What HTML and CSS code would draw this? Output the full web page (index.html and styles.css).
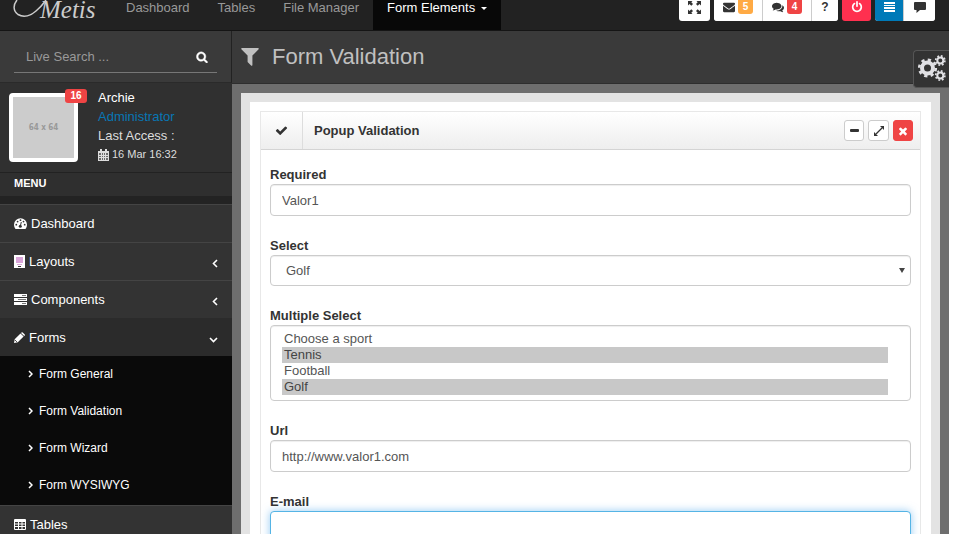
FILE: index.html
```html
<!DOCTYPE html>
<html lang="en">
<head>
<meta charset="utf-8">
<title>Metis - Form Validation</title>
<link rel="stylesheet" href="styles.css">
</head>
<body>
<header class="topbar">
  <a class="logo" href="#" aria-label="Metis">
    <svg class="swash" viewBox="0 0 38 19" aria-hidden="true"><path d="M4 0C0 5 0 11 5 14.500c6 3.500 13 1 18-3.500C28 7 30 4 33 0" fill="none" stroke="currentColor" stroke-width="1.500"/></svg>
    <span class="logo-text">Metis</span>
  </a>
  <nav class="topnav">
    <a href="#">Dashboard</a>
    <a href="#">Tables</a>
    <a href="#">File Manager</a>
    <a href="#" class="current">Form Elements <span class="caret"></span></a>
  </nav>
  <div class="tools">
    <div class="group">
      <button class="tool expand" type="button" aria-label="Fullscreen">
        <svg width="13" height="13" viewBox="0 0 13 13"><path fill="currentColor" d="M0 0h4.500L3.300 1.300 5 3 3.300 4.700 1.500 3 0 4.500zM13 0v4.500L11.500 3 9.700 4.700 8 3l1.700-1.700L8.500 0zM0 13V8.500L1.500 10l1.800-1.700L5 10l-1.700 1.700L4.500 13zM13 13H8.500l1.200-1.300L8 10l1.700-1.700L11.500 10 13 8.500z"/></svg>
      </button>
    </div>
    <div class="group">
      <button class="tool counted" type="button" aria-label="Messages">
        <svg width="12" height="12" viewBox="0 0 1792 1792"><path fill="currentColor" d="M1792 710v794q0 66-47 113t-113 47h-1472q-66 0-113-47t-47-113v-794q44 49 101 87 362 246 497 345 57 42 92.500 65.500t94.500 48 110 24.500h2q51 0 110-24.500t94.500-48 92.500-65.500q170-123 498-345 57-39 100-87zm0-294q0 79-49 151t-122 123q-376 261-468 325-10 7-42.500 31t-54 38.500-52 32.500-57.500 27-50 9h-2q-23 0-50-9t-57.500-27-52-32.500-54-38.500-42.500-31q-91-64-262-182.500t-205-142.500q-62-42-117-115.500t-55-136.500q0-78 41.500-130t118.500-52h1472q65 0 112.500 47t47.500 113z"/></svg>
        <span class="count orange">5</span>
      </button>
      <button class="tool counted" type="button" aria-label="Comments">
        <svg width="12" height="12" viewBox="0 0 1792 1792"><path fill="currentColor" d="M1408 768q0 139-94 257t-256.500 186.500-353.500 68.500q-86 0-176-16-124 88-278 128-36 9-86 16h-3q-11 0-20.500-8t-11.500-21q-1-3-1-6.500t.5-6.500 2-6l2.500-5 3.500-5.500 4-5 4.500-5 4-4.500q5-6 23-25t26-29.500 22.500-29 25-38.500 20.500-44q-124-72-195-177t-71-224q0-139 94-257t256.500-186.500 353.500-68.500 353.500 68.500 256.500 186.500 94 257zm384 256q0 120-71 224.500t-195 176.500q10 24 20.500 44t25 38.500 22.500 29 26 29.500 23 25q1 1 4 4.500t4.500 5 4 5 3.500 5.500l2.500 5 2 6 .5 6.500-1 6.500q-3 14-13 22t-22 7q-50-7-86-16-154-40-278-128-90 16-176 16-271 0-472-132 58 4 88 4 161 0 309-45t264-129q125-92 192-212t67-254q0-77-23-152 129 71 204 178t75 230z"/></svg>
        <span class="count red">4</span>
      </button>
      <button class="tool help" type="button">?</button>
    </div>
    <div class="group">
      <button class="tool power" type="button" aria-label="Log out">
        <svg width="12" height="12" viewBox="0 0 1792 1792"><path fill="currentColor" d="M1664 896q0 156-61 298t-164 245-245 164-298 61-298-61-245-164-164-245-61-298q0-182 80.500-343t226.500-270q43-32 95.500-25t83.500 50q32 42 24.500 94.500t-49.500 84.500q-98 74-151.500 181t-53.500 228q0 104 40.500 198.500t109.500 163.500 163.500 109.500 198.500 40.500 198.500-40.500 163.500-109.500 109.500-163.500 40.500-198.500q0-121-53.500-228t-151.500-181q-42-32-49.500-84.500t24.500-94.500q31-43 84-50t95 25q146 109 226.500 270t80.500 343zm-640-768v640q0 52-38 90t-90 38-90-38-38-90v-640q0-52 38-90t90-38 90 38 38 90z"/></svg>
      </button>
    </div>
    <div class="group">
      <button class="tool blue" type="button" aria-label="Toggle left menu">
        <svg width="11" height="10" viewBox="0 0 11 10"><path fill="currentColor" d="M0 0h11v2H0zM0 3h11v1H0zM0 5h11v2H0zM0 8h11v2H0z"/></svg>
      </button>
      <button class="tool" type="button" aria-label="Toggle chat">
        <svg width="12" height="11" viewBox="0 0 12 11"><path fill="currentColor" d="M1 0h10q1 0 1 1v6q0 1-1 1H6L2.500 11V8H1Q0 8 0 7V1Q0 0 1 0z"/></svg>
      </button>
    </div>
  </div>
</header>

<div class="columns">
  <aside class="sidebar">
    <form class="search">
      <div class="search-line">
        <input type="text" aria-label="Live search" placeholder="Live Search ...">
        <button type="button" aria-label="Search">
          <svg width="12" height="12" viewBox="0 0 1792 1792"><path fill="currentColor" stroke="currentColor" stroke-width="60" d="M1216 832q0-185-131.500-316.500t-316.500-131.500-316.500 131.500-131.500 316.500 131.500 316.500 316.500 131.500 316.500-131.500 131.500-316.500zm512 832q0 52-38 90t-90 38q-54 0-90-38l-343-342q-179 124-399 124-143 0-273.500-55.500t-225-150-150-225-55.500-273.500 55.500-273.500 150-225 225-150 273.500-55.500 273.500 55.500 225 150 150 225 55.500 273.500q0 220-124 399l343 343q37 37 37 90z"/></svg>
        </button>
      </div>
    </form>
    <div class="user">
      <div class="avatar">64 x 64<span class="badge">16</span></div>
      <div class="about">
        <div class="name">Archie</div>
        <a href="#">Administrator</a>
        <div>Last Access :</div>
        <div class="when">
          <svg width="11" height="12" viewBox="0 0 11 12"><path fill="currentColor" fill-rule="evenodd" d="M0 2h2V0h2v2h3V0h2v2h2v10H0zM1 4v2h2V4zM4 4v2h1V4zM6 4v2h1V4zM8 4v2h2V4zM1 7v1h2V7zM4 7v1h1V7zM6 7v1h1V7zM8 7v1h2V7zM1 9v2h2V9zM4 9v2h1V9zM6 9v2h1V9zM8 9v2h2V9z"/><path fill="currentColor" fill-opacity=".35" d="M1 4h9v7H1z"/></svg>
          16 Mar 16:32
        </div>
      </div>
    </div>
    <h2 class="menu-title">MENU</h2>
    <ul class="menu">
      <li><a href="#">
        <svg width="13" height="11" viewBox="0 0 13 11"><path fill="currentColor" d="M1.500 11A6.500 6.500 0 1 1 11.500 11z"/><g fill="#333"><circle cx="2.300" cy="6.700" r=".9"/><circle cx="3.600" cy="3.600" r=".9"/><circle cx="6.500" cy="2.200" r=".9"/><circle cx="9.500" cy="3.600" r=".9"/><circle cx="10.700" cy="6.700" r=".9"/><circle cx="6.300" cy="8.300" r="1.500"/></g><path d="M6.300 8.300l1-4.300" stroke="#333"/></svg>
        Dashboard</a></li>
      <li><a href="#">
        <svg width="11" height="13" viewBox="0 0 11 13"><path fill="currentColor" d="M0 0h11v13H0z"/><path d="M2 2h7v6H2zM3 9h5v1H3z" fill="#d9a5d9"/><path d="M4 11h3v1H4z" fill="#333"/></svg>
        Layouts
        <svg class="arrow" width="6" height="9" viewBox="0 0 6 9"><path d="M5 1L1.500 4.500 5 8" fill="none" stroke="currentColor" stroke-width="1.600"/></svg></a></li>
      <li><a href="#">
        <svg width="13" height="11" viewBox="0 0 13 11"><path fill="currentColor" d="M0 0h13v3H0zM0 4h13v3H0zM0 8h13v3H0z"/><path d="M8 1h4v1H8zM4 5h8v1H4zM8 9h4v1H8z" fill="#777"/></svg>
        Components
        <svg class="arrow" width="6" height="9" viewBox="0 0 6 9"><path d="M5 1L1.500 4.500 5 8" fill="none" stroke="currentColor" stroke-width="1.600"/></svg></a></li>
      <li class="open"><a href="#">
        <svg width="11" height="11" viewBox="0 0 11 11"><path fill="currentColor" d="M0 11l.7-3.800L6.500 1.400l3.100 3.100L3.800 10.300zM7.200.7Q8 0 8.700.5l1.800 1.800q.8.700 0 1.500L10.200 4 7 1z"/><path d="M1.200 8.200l1.600 1.600" stroke="#2b2b2b"/></svg>
        Forms
        <svg class="arrow" width="9" height="6" viewBox="0 0 9 6"><path d="M1 1l3.500 3.500L8 1" fill="none" stroke="currentColor" stroke-width="1.600"/></svg></a>
        <ul class="submenu">
          <li><a href="#"><svg width="5" height="8" viewBox="0 0 5 8"><path d="M1 1l3 3-3 3" fill="none" stroke="currentColor" stroke-width="1.500"/></svg>Form General</a></li>
          <li><a href="#"><svg width="5" height="8" viewBox="0 0 5 8"><path d="M1 1l3 3-3 3" fill="none" stroke="currentColor" stroke-width="1.500"/></svg>Form Validation</a></li>
          <li><a href="#"><svg width="5" height="8" viewBox="0 0 5 8"><path d="M1 1l3 3-3 3" fill="none" stroke="currentColor" stroke-width="1.500"/></svg>Form Wizard</a></li>
          <li><a href="#"><svg width="5" height="8" viewBox="0 0 5 8"><path d="M1 1l3 3-3 3" fill="none" stroke="currentColor" stroke-width="1.500"/></svg>Form WYSIWYG</a></li>
        </ul>
      </li>
      <li><a href="#">
        <svg width="12" height="11" viewBox="0 0 12 11"><path fill="currentColor" fill-rule="evenodd" d="M1 0h10q1 0 1 1v9q0 1-1 1H1q-1 0-1-1V1q0-1 1-1zM1 3v1.500h3V3zM5 3v1.500h2.500V3zM8.500 3v1.500H11V3zM1 5.500V7h3V5.500zM5 5.500V7h2.500V5.500zM8.500 5.500V7H11V5.500zM1 8v2h3V8zM5 8v2h2.500V8zM8.500 8v2H11V8z"/></svg>
        Tables</a></li>
    </ul>
  </aside>

  <main class="main">
    <div class="page-head">
      <svg width="18" height="18" viewBox="180 256 1432 1432"><path fill="currentColor" d="M1595 295q17 41-14 70l-493 493v742q0 42-39 59-13 5-25 5-27 0-45-19l-256-256q-19-19-19-45v-486l-493-493q-31-29-14-70 17-39 59-39h1280q42 0 59 39z"/></svg>
      <h1>Form Validation</h1>
    </div>
    <button class="settings" type="button" aria-label="Settings">
      <svg width="28" height="26" viewBox="0 0 28 26" fill="none" stroke="currentColor">
        <circle cx="9.500" cy="13" r="5.500" stroke-width="4"/><circle cx="9.500" cy="13" r="8.300" stroke-width="2.600" stroke-dasharray="3.260 3.260"/>
        <circle cx="22.300" cy="5.500" r="3" stroke-width="2"/><circle cx="22.300" cy="5.500" r="4.600" stroke-width="1.700" stroke-dasharray="1.810 1.800"/>
        <circle cx="22.300" cy="20.500" r="3" stroke-width="2"/><circle cx="22.300" cy="20.500" r="4.600" stroke-width="1.700" stroke-dasharray="1.810 1.800"/>
      </svg>
    </button>
    <div class="content">
      <div class="inner">
        <section class="box">
          <header class="box-head">
            <span class="box-icon"><svg width="13" height="13" viewBox="0 0 1792 1792"><path fill="currentColor" d="M1671 566q0 40-28 68l-724 724-136 136q-28 28-68 28t-68-28l-136-136-362-362q-28-28-28-68t28-68l136-136q28-28 68-28t68 28l294 295 656-657q28-28 68-28t68 28l136 136q28 28 28 68z"/></svg></span>
            <h3>Popup Validation</h3>
            <div class="box-tools">
              <button type="button" aria-label="Collapse"><svg width="9" height="3" viewBox="0 0 9 3"><rect width="9" height="3" rx="1" fill="currentColor"/></svg></button>
              <button type="button" class="wide" aria-label="Expand"><svg width="10" height="10" viewBox="0 0 10 10"><path d="M6 0H10v4zM0 6V10h4z" fill="currentColor"/><path d="M2 8l6-6" stroke="currentColor" stroke-width="1.300"/></svg></button>
              <button type="button" class="close" aria-label="Close"><svg width="12" height="12" viewBox="0 0 1792 1792"><path fill="currentColor" d="M1490 1322q0 40-28 68l-136 136q-28 28-68 28t-68-28l-294-294-294 294q-28 28-68 28t-68-28l-136-136q-28-28-28-68t28-68l294-294-294-294q-28-28-28-68t28-68l136-136q28-28 68-28t68 28l294 294 294-294q28-28 68-28t68 28l136 136q28 28 28 68t-28 68l-294 294 294 294q28 28 28 68z"/></svg></button>
            </div>
          </header>
          <form class="fields">
            <div class="field">
              <label for="req">Required</label>
              <input class="control" id="req" type="text" value="Valor1">
            </div>
            <div class="field">
              <label for="sport">Select</label>
              <div class="select-wrap">
                <select class="control" id="sport">
                  <option>Choose a sport</option><option>Tennis</option><option>Football</option><option selected>Golf</option>
                </select>
              </div>
            </div>
            <div class="field">
              <label for="sports">Multiple Select</label>
              <select class="control multi" id="sports" multiple size="4">
                <option>Choose a sport</option><option selected>Tennis</option><option>Football</option><option selected>Golf</option>
              </select>
            </div>
            <div class="field">
              <label for="url">Url</label>
              <input class="control" id="url" type="url" value="http://www.valor1.com">
            </div>
            <div class="field">
              <label for="email">E-mail</label>
              <input class="control active" id="email" type="email">
            </div>
          </form>
        </section>
      </div>
    </div>
  </main>
</div>
</body>
</html>
```
FILE: styles.css
```css
* { box-sizing: border-box; }

html, body { height: 100%; }

body {
  margin: 0;
  padding-right: 11px;
  overflow: hidden;
  background: #fff;
  font: 13px/16px "Liberation Sans", Arial, sans-serif;
  color: #333;
}

a { color: inherit; text-decoration: none; }
ul { margin: 0; padding: 0; list-style: none; }
button, input, select { font: inherit; margin: 0; }
button { display: inline-flex; align-items: center; justify-content: center; padding: 0; border: 0; color: #333; }
svg { display: block; flex: none; }
h1, h2, h3 { margin: 0; }

/* Top bar */
.topbar {
  display: flex;
  align-items: flex-start;
  height: 31px;
  background: #222;
  border-bottom: 1px solid #151515;
}
.logo {
  position: relative;
  width: 112px;
  padding-left: 40px;
  color: #ccc;
}
.logo-text { display: block; font: italic 25px/20px "Liberation Serif", serif; }
.swash { position: absolute; left: 13px; top: 0; width: 38px; height: 19px; }
.topnav { display: flex; align-self: stretch; color: #999; }
.topnav a { padding: 0 14px 14px; }
.topnav .current { background: #080808; color: #fff; }
.caret {
  display: inline-block;
  margin-left: 2px;
  vertical-align: middle;
  border: 3px solid transparent;
  border-top-color: currentColor;
  border-bottom: 0;
}
.tools { display: flex; gap: 4px; margin-left: auto; padding-right: 14px; }
.group { display: flex; gap: 1px; background: #ccc; border-radius: 0 0 3px 3px; overflow: hidden; }
.tool { width: 31px; height: 21px; padding-bottom: 7px; background: #fff; }
.tool.counted { width: 48px; gap: 3px; }
.tool.help { width: 26px; font-size: 12px; font-weight: bold; }
.tool.power { width: 29px; background: #ff304f; color: #fff; }
.tool.blue { width: 28px; background: #007ab8; color: #fff; }
.count {
  width: 15px;
  border-radius: 0 0 3px 3px;
  color: #fff;
  font: bold 10px/14px "Liberation Sans", sans-serif;
}
.orange { background: #fa4; }
.red { background: #ef4444; }

/* Page columns */
.columns { display: flex; min-height: calc(100% - 31px); }

/* Sidebar */
.sidebar { width: 232px; flex: none; background: #232323; color: #eee; }
.search { height: 52px; padding: 10px 14px; background: #3a3a3a; border-right: 1px solid #222; border-bottom: 1px solid #2a2a2a; }
.search-line { display: flex; align-items: center; height: 32px; border-bottom: 1px solid #777; }
.search input { flex: 1; min-width: 0; padding: 0 12px; border: 0; background: none; color: #ccc; outline: 0; }
.search input::placeholder { color: #999; opacity: 1; }
.search button { width: 31px; background: none; color: #fff; }

.user { display: flex; gap: 21px; height: 90px; padding: 5px 9px; background: #303030; border-bottom: 1px solid #222; }
.avatar {
  position: relative;
  width: 69px;
  height: 69px;
  margin-top: 5px;
  border: 4px solid #fff;
  border-radius: 4px;
  background: #ccc;
  color: #999;
  font: bold 8px/62px "DejaVu Sans Condensed", sans-serif;
  text-align: center;
}
.badge {
  position: absolute;
  top: -8px;
  right: -13px;
  width: 22px;
  border-radius: 3px;
  background: #ef4444;
  color: #fff;
  font: bold 10px/14px "Liberation Sans", sans-serif;
}
.user { gap: 20px; }
.about { line-height: 19px; color: #ddd; }
.about .name { color: #fff; }
.about a { display: block; color: #0877b5; }
.when { display: flex; align-items: center; gap: 3px; font-size: 11px; }

.menu-title { height: 23px; padding: 0 14px; background: #2f2f2f; color: #fff; font-size: 11px; line-height: 21px; }
.menu { padding-top: 8px; }
.menu a { display: flex; align-items: center; gap: 4px; height: 38px; padding: 0 14px; background: #333; border-top: 1px solid #444; color: #fff; }
.menu .arrow { margin-left: auto; position: relative; top: 2px; }
.menu .open > a { background: #2b2b2b; border-top-color: #2b2b2b; }
.menu .submenu { padding-bottom: 1px; background: #0a0a0a; }
.menu .submenu a { height: 37px; gap: 6px; padding: 0 28px 2px; border: 0; background: #0a0a0a; font-size: 12px; }

/* Main column */
.main { position: relative; flex: 1; min-width: 0; background: #6e6e6e; }
.page-head { display: flex; align-items: center; gap: 13px; height: 53px; padding: 0 9px; background: #3a3a3a; border-bottom: 1px solid #2e2e2e; color: #c0c0c0; }
h1 { font-size: 22px; line-height: 26px; font-weight: normal; }
.settings {
  position: absolute;
  top: 19px;
  right: 0;
  width: 36px;
  height: 38px;
  padding-bottom: 3px;
  background: #333;
  border: 1px solid #555;
  border-right: 0;
  border-radius: 4px 0 0 4px;
  color: #e0e0e4;
}
.content { padding: 9px 9px 0; }
.inner { padding: 9px 10px 0; background: #fff; border: 9px solid #e3e3e3; border-bottom: 0; }

.box { border: 1px solid #e8e8e8; }
.box-head { display: flex; align-items: center; height: 38px; background: linear-gradient(#fff, #eee); border-bottom: 1px solid #d4d4d4; }
.box-icon { display: flex; align-items: center; justify-content: center; align-self: stretch; width: 42px; border-right: 1px solid #ddd; }
h3 { padding-left: 11px; font-size: 13px; line-height: 16px; }
.box-tools { display: flex; gap: 4px; margin-left: auto; padding-right: 7px; }
.box-tools button { width: 20px; height: 21px; background: #fff; border: 1px solid #ccc; border-radius: 3px; }
.box-tools .wide { width: 21px; }
.box-tools .close { background: #ef4444; border-color: #ef4444; color: #fff; }

.fields { padding: 16px 9px; }
.field { margin-bottom: 21px; }
.field label { display: block; font-weight: bold; line-height: 18px; }
.control {
  display: block;
  width: 100%;
  height: 32px;
  padding: 0 11px;
  background: #fff;
  border: 1px solid #ccc;
  border-radius: 4px;
  box-shadow: inset 0 1px 1px rgba(0, 0, 0, 0.07);
  color: #555;
  outline: 0;
}
.select-wrap { position: relative; }
.select-wrap .control { height: 31px; padding: 0 15px; appearance: none; }
.select-wrap::after {
  content: "";
  position: absolute;
  right: 6px;
  top: 13px;
  border: 3px solid transparent;
  border-top: 5px solid #444;
  border-bottom: 0;
}
.multi { height: 76px; padding: 5px 22px 5px 11px; overflow: hidden; }
.multi option { min-height: 16px; padding: 0 2px; line-height: 16px; }
.multi option:checked { background: #c8c8c8 linear-gradient(#c8c8c8, #c8c8c8); color: #444; }
.control.active { border-color: #55b4e5; box-shadow: 0 0 8px rgba(82, 168, 236, 0.6); }
```
